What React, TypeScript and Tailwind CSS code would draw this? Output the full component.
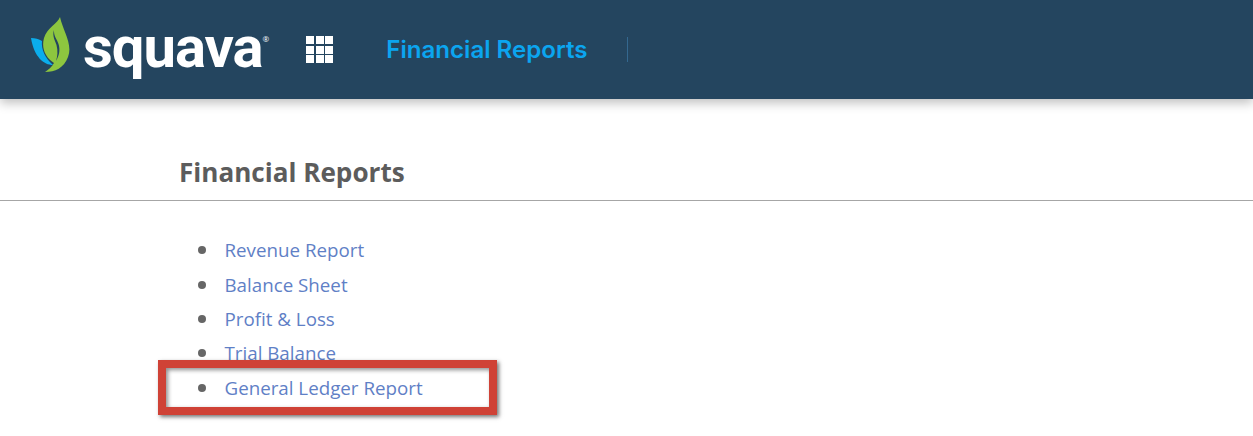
import React from "react";

const links = [
  "Revenue Report",
  "Balance Sheet",
  "Profit & Loss",
  "Trial Balance",
  "General Ledger Report",
];

const Logo: React.FC = () => (
  <div className="flex items-start">
    <svg width="40" height="56" viewBox="0 0 40 56" className="shrink-0">
      <path d="M0 21 C4 21 8 22 11 24 C10 32 14 41 22 48 C13 48 3 40 0 21 Z" fill="#0badec" />
      <path d="M29 0 C27 6 16 11 13 21 C10 32 15 41 23 46 C21 50 17 53 14 55 C24 55 33 51 37 40 C42 27 32 14 29 0 Z" fill="#8dc63f" />
      <path d="M23 13 C21 19 24 23 25.5 28 C27 34 26.5 39 25 44 C28 39 29.5 33 27.5 27 C26 22 22.5 19 23 13 Z" fill="#24455f" />
    </svg>
    <span className="ml-[12px] mt-[1px] text-[58px] leading-[58px] font-bold tracking-[-1px] text-white font-['Roboto',sans-serif]">
      squava
    </span>
    <span className="mt-[17px] text-[8px] leading-[10px] text-white font-['Open_Sans',sans-serif]">®</span>
  </div>
);

const AppGrid: React.FC = () => (
  <div className="grid grid-cols-3 gap-[1.5px] w-[27px] shrink-0">
    {Array.from({ length: 9 }).map((_, i) => (
      <div key={i} className="h-[8px] w-[8px] bg-white" />
    ))}
  </div>
);

export default function App() {
  return (
    <div className="h-[436px] w-[1253px] overflow-hidden bg-white relative">
      <header className="flex h-[99px] items-start bg-[#24455f] pl-[31px] pt-[17px] shadow-[0_4px_10px_rgba(0,0,0,0.25)]">
        <Logo />
        <div className="ml-[37px] mt-[19px]">
          <AppGrid />
        </div>
        <div className="ml-[53px] mt-[18px] flex items-center">
          <span className="text-[24.1px] font-semibold leading-[29px] text-[#0ba5f0] font-['Inter',sans-serif]">
            Financial Reports
          </span>
          <div className="ml-[39px] h-[25px] w-px bg-[#34688f]" />
        </div>
      </header>

      <main>
        <h1 className="mt-[55px] pl-[179px] text-[26.1px] font-bold leading-[37px] text-[#5c5c5c] font-['Open_Sans',sans-serif]">
          Financial Reports
        </h1>
        <div className="mt-[9px] h-px bg-[#a6a6a6]" />
        <ul className="mt-[32px] pl-[198px] font-['Open_Sans',sans-serif]">
          {links.map((l) => (
            <li key={l} className="flex h-[34.4px] items-center text-[18.75px] text-[#5f80c6]">
              <span className="mr-[18.5px] h-[8px] w-[8px] rounded-full bg-[#666666]" />
              {l}
            </li>
          ))}
        </ul>
      </main>

      <div className="absolute left-[158px] top-[360px] h-[55px] w-[339px] border-[8px] border-[#cf4236] shadow-[2px_2px_4px_rgba(0,0,0,0.55),inset_2px_2px_4px_rgba(0,0,0,0.45)]" />
    </div>
  );
}
